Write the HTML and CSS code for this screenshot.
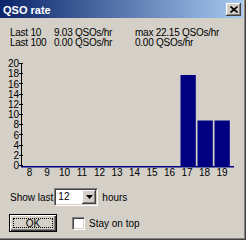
FILE: index.html
```html
<!DOCTYPE html>
<html>

<head>
    <title>QSO rate</title>
    <meta charset="utf-8">
    <meta name="viewport" content="width=device-width, initial-scale=1.0">
    <link rel="stylesheet" href="styles.css">
</head>

<body>

    <div class="vindue">
        <header class="titel">
            <h1>QSO rate</h1>
            <button class="luk">
                <svg width="8" height="7" viewBox="0 0 8 7">
                    <path d="M0.5 0.5 L7.5 6.5 M7.5 0.5 L0.5 6.5" stroke="black" stroke-width="1.6" />
                </svg>
            </button>
        </header>

        <section class="tal">
            <p>Last 10</p>
            <p>9.03 QSOs/hr</p>
            <p>max 22.15 QSOs/hr</p>
            <p>Last 100</p>
            <p>0.00 QSOs/hr</p>
            <p>0.00 QSOs/hr</p>
        </section>

        <svg class="graf" width="243" height="125" viewBox="0 55 243 125">
            <g class="y_tal">
                <text x="19" y="169.1">0</text>
                <text x="19" y="158.9">2</text>
                <text x="19" y="148.7">4</text>
                <text x="19" y="138.5">6</text>
                <text x="19" y="128.3">8</text>
                <text x="19" y="118.1">10</text>
                <text x="19" y="107.9">12</text>
                <text x="19" y="97.7">14</text>
                <text x="19" y="87.5">16</text>
                <text x="19" y="77.3">18</text>
                <text x="19" y="67.1">20</text>
            </g>
            <path class="akse" d="M21.5 63 V166
                M19 165.5 H23 M19 155.5 H23 M19 145.5 H23 M19 134.5 H23 M19 124.5 H23 M19 114.5 H23
                M19 104.5 H23 M19 94.5 H23 M19 83.5 H23 M19 73.5 H23 M19 63.5 H23" />
            <rect class="soejle" x="180.5" y="75" width="15.3" height="91" />
            <rect class="soejle" x="197.5" y="120.5" width="15.3" height="45.5" />
            <rect class="soejle" x="214.5" y="120.5" width="15.3" height="45.5" />
            <rect class="x_akse" x="21" y="166" width="213" height="1.5" />
            <g class="x_tal">
                <text x="29.5" y="175.5">8</text>
                <text x="47" y="175.5">9</text>
                <text x="64.5" y="175.5">10</text>
                <text x="82" y="175.5">11</text>
                <text x="99.5" y="175.5">12</text>
                <text x="117" y="175.5">13</text>
                <text x="134.5" y="175.5">14</text>
                <text x="152" y="175.5">15</text>
                <text x="169.5" y="175.5">16</text>
                <text x="187" y="175.5">17</text>
                <text x="204.5" y="175.5">18</text>
                <text x="222" y="175.5">19</text>
            </g>
        </svg>

        <div class="valg">
            <span>Show last</span>
            <div class="kombi">
                <span class="vaerdi">12</span>
                <span class="pil">
                    <svg width="7" height="4" viewBox="0 0 7 4">
                        <polygon points="0,0 7,0 3.5,4" fill="black" />
                    </svg>
                </span>
            </div>
            <span class="enhed">hours</span>
        </div>

        <div class="knapper">
            <button class="ok"><span class="fokus">OK</span></button>
            <span class="boks"></span>
            <span class="boks_tekst">Stay on top</span>
        </div>
    </div>

</body>

</html>
```

FILE: styles.css
```css
body {
    margin: 0;
    background-color: #d4d0c8;
    font-family: "Liberation Sans", Arial, sans-serif;
    font-size: 10px;
    color: black;
}

.vindue {
    width: 246px;
    height: 240px;
    box-sizing: border-box;
    padding-right: 2px;
    border-right: 1px solid #404040;
    border-bottom: 1px solid #404040;
    box-shadow: inset -1px -1px #808080;
}

.titel {
    height: 18px;
    display: flex;
    justify-content: space-between;
    align-items: flex-start;
    background: linear-gradient(to right, #0a246a, #a6caf0);
}

h1 {
    margin: 1px 0 0 3px;
    font-size: 11px;
    line-height: 18px;
    font-weight: bold;
    color: white;
}

.luk {
    width: 15px;
    height: 13px;
    margin: 3px 2px 0 0;
    padding: 0;
    border: none;
    background-color: #d4d0c8;
    box-shadow: inset -1px -1px #404040, inset 1px 1px #ffffff, inset -2px -2px #808080;
    display: flex;
    align-items: center;
    justify-content: center;
}

.luk svg {
    display: block;
}

.tal {
    display: grid;
    grid-template-columns: 44px 81px 1fr;
    margin-top: 10px;
    padding-left: 10px;
    letter-spacing: -0.25px;
}

.tal p {
    margin: 0;
    line-height: 10px;
    white-space: nowrap;
}

.graf {
    display: block;
    margin-top: 7px;
}

.graf text {
    font-family: "Liberation Sans", Arial, sans-serif;
    font-size: 10px;
    fill: black;
}

.y_tal text {
    text-anchor: end;
}

.x_tal text {
    text-anchor: middle;
}

.akse {
    stroke: black;
    stroke-width: 1;
    fill: none;
}

.soejle {
    fill: #000080;
}

.x_akse {
    fill: #000080;
}

.valg {
    display: flex;
    align-items: center;
    height: 18px;
    margin-top: 8px;
    padding-left: 10px;
}

.kombi {
    display: flex;
    width: 44px;
    height: 18px;
    margin-left: 1px;
    box-sizing: border-box;
    background-color: white;
    border: 1px solid;
    border-color: #808080 #ffffff #ffffff #808080;
    box-shadow: inset 1px 1px #404040, inset -1px -1px #d4d0c8;
    padding: 1px;
}

.vaerdi {
    flex: 1;
    padding-left: 2px;
    line-height: 14px;
}

.pil {
    width: 14px;
    display: flex;
    align-items: center;
    justify-content: center;
    background-color: #d4d0c8;
    box-shadow: inset -1px -1px #404040, inset 1px 1px #ffffff, inset -2px -2px #808080;
}

.enhed {
    margin-left: 4px;
}

.knapper {
    display: flex;
    align-items: center;
    height: 18px;
    margin-top: 8px;
}

.ok {
    width: 48px;
    height: 18px;
    margin-left: 9px;
    padding: 3px;
    display: flex;
    font-family: inherit;
    font-size: 10px;
    color: black;
    background-color: #d4d0c8;
    border: 1px solid black;
    box-shadow: inset 1px 1px #ffffff, inset -1px -1px #404040, inset -2px -2px #808080;
}

.fokus {
    flex: 1;
    display: flex;
    align-items: center;
    justify-content: center;
    border: 1px dotted black;
}

.boks {
    width: 13px;
    height: 13px;
    margin-left: 15px;
    box-sizing: border-box;
    background-color: white;
    border: 1px solid;
    border-color: #808080 #ffffff #ffffff #808080;
    box-shadow: inset 1px 1px #404040, inset -1px -1px #d4d0c8;
}

.boks_tekst {
    margin-left: 4px;
}
```
